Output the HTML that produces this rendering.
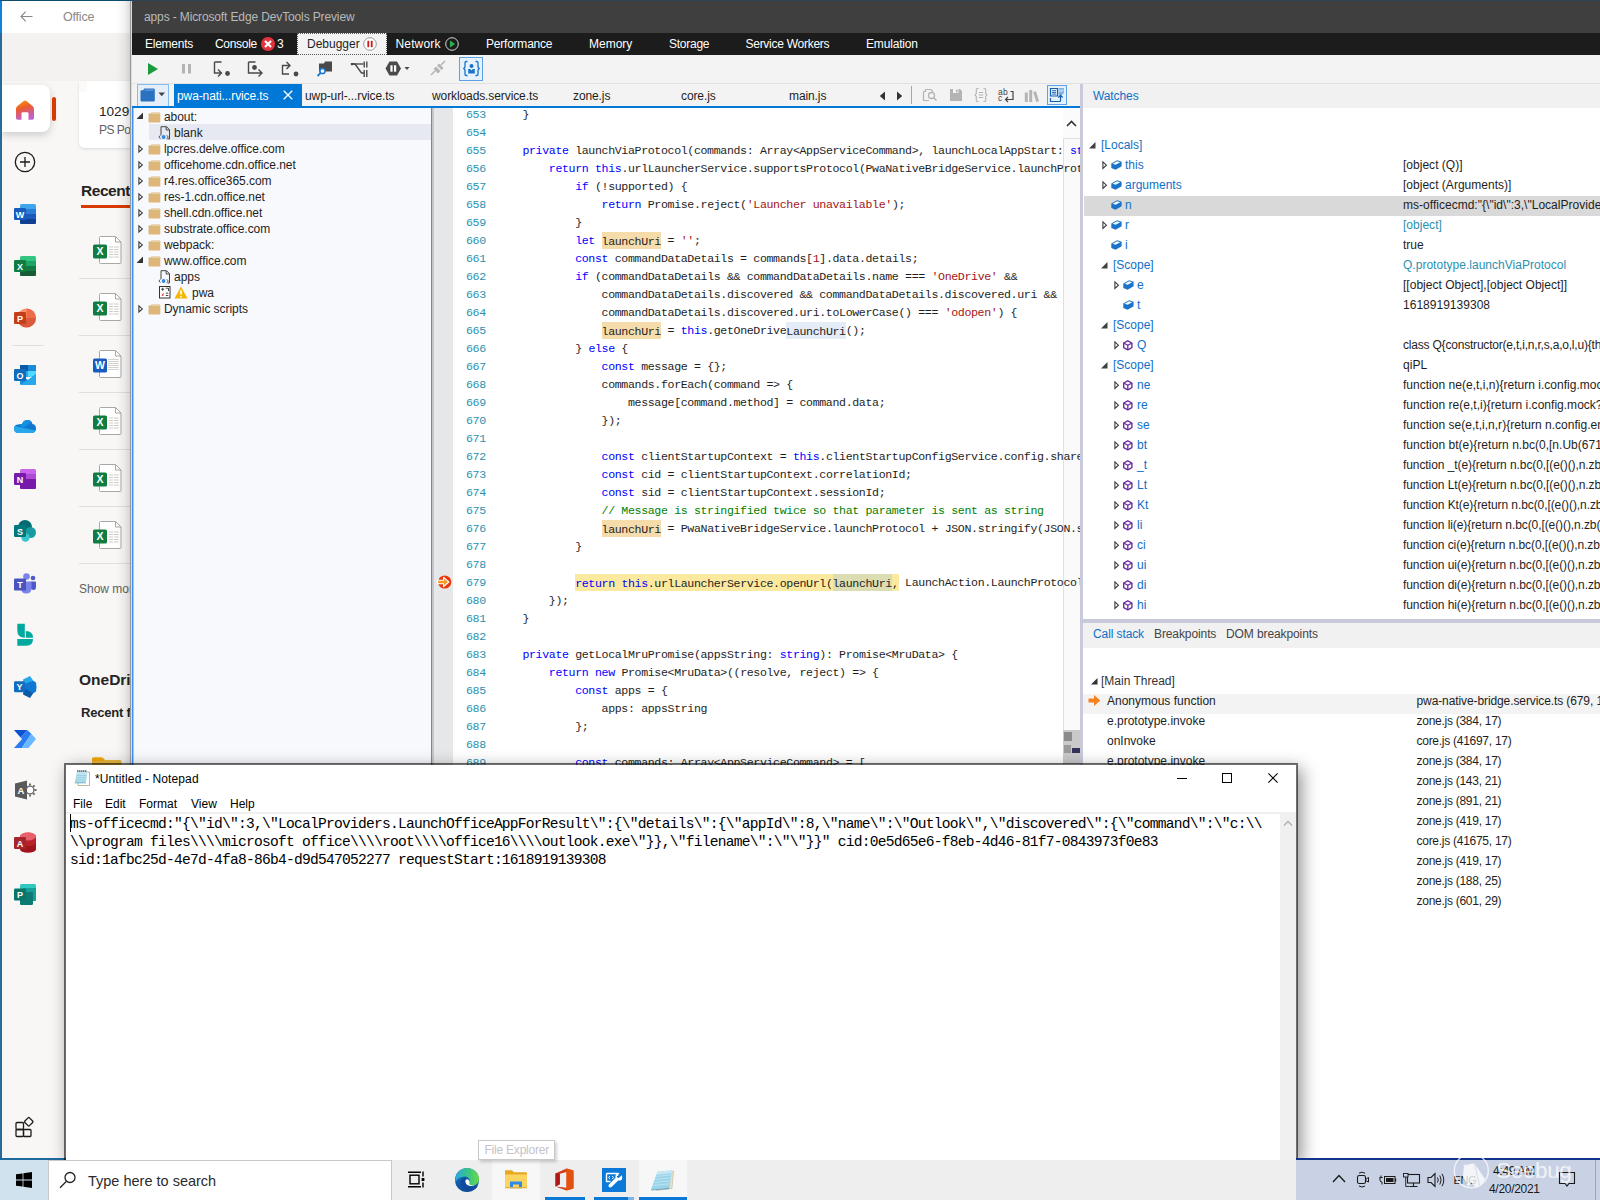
<!DOCTYPE html><html><head><meta charset="utf-8"><title>screenshot</title><style>
*{box-sizing:border-box;margin:0;padding:0}
html,body{width:1600px;height:1200px;overflow:hidden;background:#fff}
body{font-family:"Liberation Sans",sans-serif;font-size:12px;color:#1e1e1e;position:relative}
.abs{position:absolute}
.t{position:absolute;white-space:pre;line-height:16px;height:16px}
.mono{font-family:"Liberation Mono",monospace}
svg{position:absolute;overflow:visible}
/* office */
#office{position:absolute;left:0;top:0;width:140px;height:1160px;background:#f6f5f4;overflow:hidden}
/* devtools */
#dt{position:absolute;left:132px;top:0;width:1468px;height:1160px;background:#fff;overflow:hidden}
#code{position:absolute;left:301px;top:108px;width:647px;height:1052px;background:#fff;overflow:hidden}
.ln{position:absolute;left:32px;width:22px;color:#2b91af;font-family:"Liberation Mono",monospace;font-size:11.6px;letter-spacing:-0.36px;line-height:18px;height:18px;white-space:pre}
.cl{position:absolute;left:62px;font-family:"Liberation Mono",monospace;font-size:11.6px;letter-spacing:-0.36px;line-height:18px;height:18px;white-space:pre;color:#1e1e1e}
.k{color:#0000ff}.s{color:#a31515}.c{color:#008000}
.hl,.hy,.hb,.hg{padding:2.5px 0 2px 0}
.hl{background:#f6dcab}
.hy{background:#fbe9a0}
.hb{background:#e4ecf7}
.hg{background:#dcddb2}
/* notepad */
#np{position:absolute;left:65px;top:763px;width:1233px;height:398px;background:#fff;border:1px solid #5a5a5a;overflow:hidden}
.npt{position:absolute;font-family:"Liberation Mono",monospace;font-size:14.6px;letter-spacing:-0.76px;line-height:18px;height:18px;white-space:pre;color:#000}
/* taskbar */
#tb{position:absolute;left:0;top:1160px;width:1600px;height:40px;background:#eeeeee;overflow:hidden}
</style></head><body>
<div class="abs" style="left:0;top:0;width:132px;height:1160px;overflow:hidden;background:#f8f7f6">
<div class="abs" style="left:0px;top:0px;width:132px;height:33px;background:#fff;"></div>
<div class="abs" style="left:0px;top:33px;width:132px;height:48px;background:#f3f2f1;"></div>
<div class="abs" style="left:79px;top:81px;width:60px;height:67px;background:#fff;border-radius:0 0 0 5px;box-shadow:0 1px 3px rgba(0,0,0,0.12);"></div>
<div class="abs" style="left:79px;top:81px;width:8px;height:11px;background:#fbfaf9;"></div>
<div class="t" style="left:99px;top:102.0px;color:#242424;font-size:13.6px;line-height:20px;height:20px;">10295</div>
<div class="t" style="left:99px;top:121.0px;color:#616161;line-height:18px;height:18px;letter-spacing:-0.5px;">PS Pos</div>
<div class="abs" style="left:2px;top:85px;width:48px;height:47px;background:#fff;border-radius:0 8px 8px 0;box-shadow:0 3px 8px rgba(0,0,0,0.18);"></div>
<svg style="left:16px;top:100px;" width="18" height="20" viewBox="0 0 18 20"><defs><linearGradient id="hg" x1="0" y1="0" x2="0.3" y2="1"><stop offset="0" stop-color="#f7a30c"/><stop offset="0.45" stop-color="#ee5a2a"/><stop offset="1" stop-color="#c060d0"/></linearGradient></defs><path d="M9 0.4Q9.800 0.4 10.4 0.9L16.800 6.200Q18 7.200 18 8.800V18Q18 19.800 16.200 19.800H12.500V13.500Q12.500 12.300 11.300 12.300H6.700Q5.500 12.300 5.500 13.500V19.800H1.800Q0 19.800 0 18V8.800Q0 7.200 1.200 6.200L7.600 0.9Q8.200 0.4 9 0.4Z" fill="url(#hg)"/></svg>
<div class="abs" style="left:52px;top:97px;width:4px;height:24px;background:#d83b01;border-radius:2px;"></div>
<svg style="left:20px;top:11px;" width="13" height="11" viewBox="0 0 13 11"><path d="M12.500 5.5H1M5.700 0.7L1 5.5L5.700 10.3" fill="none" stroke="#8a8886" stroke-width="1.1"/></svg>
<div class="t" style="left:63px;top:7.0px;color:#8a8886;font-size:12.5px;line-height:20px;height:20px;letter-spacing:-0.2px;">Office</div>
<svg style="left:14px;top:151px;" width="22" height="22" viewBox="0 0 22 22"><circle cx="11" cy="11" r="9.700" fill="none" stroke="#1b1b1b" stroke-width="1.3"/><path d="M11 6V16M6 11H16" stroke="#1b1b1b" stroke-width="1.3"/></svg>
<div class="t" style="left:81px;top:179.5px;color:#242424;font-size:15.5px;font-weight:700;line-height:22px;height:22px;letter-spacing:-0.45px;">Recent</div>
<div class="abs" style="left:81px;top:205px;width:60px;height:2.5px;background:#d83b01;"></div>
<svg style="left:93px;top:236px;" width="29" height="28" viewBox="0 0 29 28"><path d="M7.5 0.5H22.500L28 6V26.500Q28 27.500 27 27.500H7.5Q6.500 27.500 6.500 26.500V1.5Q6.500 0.5 7.5 0.5Z" fill="#fff" stroke="#a09e9c" stroke-width="0.9"/><path d="M22.500 0.5V6H28" fill="none" stroke="#a09e9c" stroke-width="0.9"/><path d="M16 11H25.500M16 13.500H25.500M16 16H25.500M16 18.500H25.500M16 21H25.500" stroke="#c8c6c4" stroke-width="0.9"/><path d="M20.500 10.500V21.500" stroke="#fff" stroke-width="0.9"/><rect x="0" y="8.5" width="14" height="14" rx="1.6" fill="#107c41"/><text x="7" y="19.400" font-family="Liberation Sans" font-weight="700" font-size="10.5" fill="#fff" text-anchor="middle">X</text></svg>
<svg style="left:93px;top:293px;" width="29" height="28" viewBox="0 0 29 28"><path d="M7.5 0.5H22.500L28 6V26.500Q28 27.500 27 27.500H7.5Q6.500 27.500 6.500 26.500V1.5Q6.500 0.5 7.5 0.5Z" fill="#fff" stroke="#a09e9c" stroke-width="0.9"/><path d="M22.500 0.5V6H28" fill="none" stroke="#a09e9c" stroke-width="0.9"/><path d="M16 11H25.500M16 13.500H25.500M16 16H25.500M16 18.500H25.500M16 21H25.500" stroke="#c8c6c4" stroke-width="0.9"/><path d="M20.500 10.500V21.500" stroke="#fff" stroke-width="0.9"/><rect x="0" y="8.5" width="14" height="14" rx="1.6" fill="#107c41"/><text x="7" y="19.400" font-family="Liberation Sans" font-weight="700" font-size="10.5" fill="#fff" text-anchor="middle">X</text></svg>
<svg style="left:93px;top:350px;" width="29" height="28" viewBox="0 0 29 28"><path d="M7.5 0.5H22.500L28 6V26.500Q28 27.500 27 27.500H7.5Q6.500 27.500 6.500 26.500V1.5Q6.500 0.5 7.5 0.5Z" fill="#fff" stroke="#a09e9c" stroke-width="0.9"/><path d="M22.500 0.5V6H28" fill="none" stroke="#a09e9c" stroke-width="0.9"/><path d="M15 9.500H25.500M15 11.500H25.500M15 13.500H25.500M15 15.500H25.500M15 17.500H25.500M15 19.500H25.500" stroke="#c8c6c4" stroke-width="0.8"/><rect x="0" y="8.5" width="14" height="14" rx="1.6" fill="#185abd"/><text x="7" y="19.400" font-family="Liberation Sans" font-weight="700" font-size="10.5" fill="#fff" text-anchor="middle">W</text></svg>
<svg style="left:93px;top:407px;" width="29" height="28" viewBox="0 0 29 28"><path d="M7.5 0.5H22.500L28 6V26.500Q28 27.500 27 27.500H7.5Q6.500 27.500 6.500 26.500V1.5Q6.500 0.5 7.5 0.5Z" fill="#fff" stroke="#a09e9c" stroke-width="0.9"/><path d="M22.500 0.5V6H28" fill="none" stroke="#a09e9c" stroke-width="0.9"/><path d="M16 11H25.500M16 13.500H25.500M16 16H25.500M16 18.500H25.500M16 21H25.500" stroke="#c8c6c4" stroke-width="0.9"/><path d="M20.500 10.500V21.500" stroke="#fff" stroke-width="0.9"/><rect x="0" y="8.5" width="14" height="14" rx="1.6" fill="#107c41"/><text x="7" y="19.400" font-family="Liberation Sans" font-weight="700" font-size="10.5" fill="#fff" text-anchor="middle">X</text></svg>
<svg style="left:93px;top:464px;" width="29" height="28" viewBox="0 0 29 28"><path d="M7.5 0.5H22.500L28 6V26.500Q28 27.500 27 27.500H7.5Q6.500 27.500 6.500 26.500V1.5Q6.500 0.5 7.5 0.5Z" fill="#fff" stroke="#a09e9c" stroke-width="0.9"/><path d="M22.500 0.5V6H28" fill="none" stroke="#a09e9c" stroke-width="0.9"/><path d="M16 11H25.500M16 13.500H25.500M16 16H25.500M16 18.500H25.500M16 21H25.500" stroke="#c8c6c4" stroke-width="0.9"/><path d="M20.500 10.500V21.500" stroke="#fff" stroke-width="0.9"/><rect x="0" y="8.5" width="14" height="14" rx="1.6" fill="#107c41"/><text x="7" y="19.400" font-family="Liberation Sans" font-weight="700" font-size="10.5" fill="#fff" text-anchor="middle">X</text></svg>
<svg style="left:93px;top:521px;" width="29" height="28" viewBox="0 0 29 28"><path d="M7.5 0.5H22.500L28 6V26.500Q28 27.500 27 27.500H7.5Q6.500 27.500 6.500 26.500V1.5Q6.500 0.5 7.5 0.5Z" fill="#fff" stroke="#a09e9c" stroke-width="0.9"/><path d="M22.500 0.5V6H28" fill="none" stroke="#a09e9c" stroke-width="0.9"/><path d="M16 11H25.500M16 13.500H25.500M16 16H25.500M16 18.500H25.500M16 21H25.500" stroke="#c8c6c4" stroke-width="0.9"/><path d="M20.500 10.500V21.500" stroke="#fff" stroke-width="0.9"/><rect x="0" y="8.5" width="14" height="14" rx="1.6" fill="#107c41"/><text x="7" y="19.400" font-family="Liberation Sans" font-weight="700" font-size="10.5" fill="#fff" text-anchor="middle">X</text></svg>
<div class="abs" style="left:79px;top:278px;width:60px;height:1px;background:#e1dfdd;"></div>
<div class="abs" style="left:79px;top:335px;width:60px;height:1px;background:#e1dfdd;"></div>
<div class="abs" style="left:79px;top:392px;width:60px;height:1px;background:#e1dfdd;"></div>
<div class="abs" style="left:79px;top:449px;width:60px;height:1px;background:#e1dfdd;"></div>
<div class="abs" style="left:79px;top:506px;width:60px;height:1px;background:#e1dfdd;"></div>
<div class="abs" style="left:79px;top:563px;width:60px;height:1px;background:#e1dfdd;"></div>
<div class="t" style="left:79px;top:580.0px;color:#616161;line-height:18px;height:18px;">Show mor</div>
<div class="t" style="left:79px;top:669.0px;color:#242424;font-size:15.5px;font-weight:700;line-height:22px;height:22px;font-weight:600;">OneDri</div>
<div class="t" style="left:81px;top:702.5px;color:#242424;font-size:13px;font-weight:700;line-height:20px;height:20px;letter-spacing:-0.2px;">Recent f</div>
<svg style="left:92px;top:757px;" width="30" height="10" viewBox="0 0 30 10"><path d="M0 2Q0 0.5 1.500 0.5H9.500Q10.500 0.5 11.500 1.500L13 3H28Q29.500 3 29.500 4.500V10H0Z" fill="#e8b840"/><path d="M0 2Q0 0.5 1.500 0.5H9.500Q10.500 0.5 11.500 1.500L12.500 2.500L11 4H0Z" fill="#f0a800"/></svg>
<div class="abs" style="left:12px;top:345px;width:32px;height:1px;background:#e1dfdd;"></div>
<svg style="left:14px;top:204px;" width="22" height="20" viewBox="0 0 22 20"><rect x="6" y="0" width="16" height="20" rx="1.5" fill="#41a5ee"/><rect x="6" y="5" width="16" height="5" fill="#2b7cd3"/><rect x="6" y="10" width="16" height="5" fill="#185abd"/><path d="M6 15H22V18.500Q22 20 20.500 20H7.5Q6 20 6 18.500Z" fill="#103f91"/><rect x="0" y="4" width="12" height="12" rx="1.3" fill="#185abd"/><text x="6" y="13.600" font-family="Liberation Sans" font-weight="700" font-size="9" fill="#fff" text-anchor="middle">W</text></svg>
<svg style="left:14px;top:256px;" width="22" height="20" viewBox="0 0 22 20"><rect x="6" y="0" width="16" height="20" rx="1.5" fill="#33c481"/><rect x="6" y="5" width="16" height="5" fill="#21a366"/><rect x="6" y="10" width="16" height="5" fill="#107c41"/><path d="M6 15H22V18.500Q22 20 20.500 20H7.5Q6 20 6 18.500Z" fill="#185c37"/><rect x="0" y="4" width="12" height="12" rx="1.3" fill="#107c41"/><text x="6" y="13.600" font-family="Liberation Sans" font-weight="700" font-size="9" fill="#fff" text-anchor="middle">X</text></svg>
<svg style="left:14px;top:308px;" width="22" height="20" viewBox="0 0 22 20"><circle cx="12.500" cy="10" r="9.500" fill="#ff8f6b"/><path d="M12.500 0.5A9.500 9.500 0 0 1 22 10H12.500Z" fill="#ed6c47"/><path d="M3 10H22A9.500 9.500 0 0 1 3 10Z" fill="#d35230" opacity="0.85"/><rect x="0" y="4" width="12" height="12" rx="1.3" fill="#c43e1c"/><text x="6.0" y="13.6" font-family="Liberation Sans" font-weight="700" font-size="9" fill="#fff" text-anchor="middle">P</text></svg>
<svg style="left:14px;top:365px;" width="22" height="20" viewBox="0 0 22 20"><rect x="6" y="0" width="16" height="12" rx="1.2" fill="#28a8ea"/><rect x="6" y="0" width="8" height="6" fill="#0a5aa8"/><rect x="14" y="0" width="8" height="6" fill="#1a8ad8"/><rect x="14" y="6" width="8" height="6" fill="#50d9ff"/><path d="M6 10L14 15L22 9V18.500Q22 20 20.500 20H7.500Q6 20 6 18.500Z" fill="#1490df"/><path d="M6 20L22 10V18.500Q22 20 20.500 20Z" fill="#28a8ea"/><rect x="0" y="4" width="12" height="12" rx="1.3" fill="#0f6cbd"/><text x="6.0" y="13.6" font-family="Liberation Sans" font-weight="700" font-size="9" fill="#fff" text-anchor="middle">O</text></svg>
<svg style="left:14px;top:419px;" width="22" height="15" viewBox="0 0 22 15"><path d="M8 5Q9.500 1 13.500 1Q17.500 1 18.500 5Q22 5.500 22 9.500Q22 13.500 18 14H5Q0 14 0 9.500Q0 5.500 4.500 5.500Q6 4.600 8 5Z" fill="#0f78d4"/><path d="M4.500 5.500Q6 4.600 8 5Q9.500 1 13.500 1Q16 1 17.500 3L9 9Z" fill="#1490df"/><path d="M0 9.500Q0 14 5 14H18Q20.500 13.700 21.500 11.500L9 9L1 7Q0 8 0 9.500Z" fill="#28a8ea"/></svg>
<svg style="left:14px;top:469px;" width="22" height="20" viewBox="0 0 22 20"><rect x="6" y="0" width="16" height="20" rx="1.5" fill="#ca64ea"/><rect x="6" y="5" width="16" height="5" fill="#ae4bd5"/><rect x="6" y="10" width="16" height="5" fill="#7719aa"/><path d="M6 15H22V18.500Q22 20 20.500 20H7.5Q6 20 6 18.500Z" fill="#7719aa"/><rect x="0" y="4" width="12" height="12" rx="1.3" fill="#7719aa"/><text x="6" y="13.600" font-family="Liberation Sans" font-weight="700" font-size="9" fill="#fff" text-anchor="middle">N</text></svg>
<svg style="left:14px;top:520px;" width="22" height="22" viewBox="0 0 22 22"><circle cx="11" cy="7" r="7" fill="#036c70"/><circle cx="16.500" cy="12.500" r="5.500" fill="#1a9ba1"/><circle cx="11.500" cy="17.500" r="4.200" fill="#37c6d0"/><rect x="0" y="5" width="12" height="12" rx="1.3" fill="#03787c"/><text x="6.0" y="14.6" font-family="Liberation Sans" font-weight="700" font-size="9" fill="#fff" text-anchor="middle">S</text></svg>
<svg style="left:14px;top:573px;" width="22" height="21" viewBox="0 0 22 21"><circle cx="12.500" cy="3.500" r="3.300" fill="#7b83eb"/><circle cx="19" cy="5" r="2.300" fill="#5059c9"/><path d="M16.500 8.500H21Q22 8.500 22 9.500V14Q22 17 19.500 17Q17 17 16.500 15Z" fill="#5059c9"/><path d="M7 8.500H16.500Q17.500 8.500 17.500 9.500V15Q17.500 20.500 12.200 20.500Q7 20.500 7 15Z" fill="#7b83eb"/><rect x="0" y="5.5" width="12" height="12" rx="1.3" fill="#4b53bc"/><text x="6.0" y="15.1" font-family="Liberation Sans" font-weight="700" font-size="9" fill="#fff" text-anchor="middle">T</text></svg>
<svg style="left:17px;top:623px;" width="17" height="24" viewBox="0 0 17 24"><path d="M0.300 0.800H7.800V14.800Q0.300 14.800 0.300 7.300Z" fill="#00a99d"/><path d="M8.800 8V14.800H16Q16 8 8.800 8Z" fill="#00a99d"/><path d="M0.300 16H16Q16 22.800 9.200 22.800H0.300Z" fill="#00a99d"/></svg>
<svg style="left:14px;top:676px;" width="22" height="22" viewBox="0 0 22 22"><path d="M9 3.500L16 0L19.300 4.800L10 10Z" fill="#28a8ea"/><path d="M10 8L19.300 4.800L22 6.500Q23 11 22 15.500L19.300 17.200L10 14Z" fill="#0f78d4"/><path d="M10 12L19.300 17.200L16 22L9 18.500Z" fill="#0a5aa8"/><rect x="0" y="5.3" width="11" height="11" rx="1.3" fill="#106ebe"/><text x="5.5" y="13.9" font-family="Liberation Sans" font-weight="700" font-size="9" fill="#fff" text-anchor="middle">Y</text></svg>
<svg style="left:14px;top:730px;" width="22" height="18" viewBox="0 0 22 18"><path d="M0 0H13.300L6.600 7.400Z" fill="#0b53ce"/><path d="M0 18H7.800L17.300 3.800L13.300 0L6.600 7.400L8 9Z" fill="#2a7cf0"/><path d="M17.300 3.800L22 9L14.500 18H7.800Z" fill="#6ab8ff"/></svg>
<svg style="left:14px;top:779px;" width="24" height="22" viewBox="0 0 24 22"><circle cx="16" cy="11" r="3.900" fill="#fff" stroke="#6a6a6a" stroke-width="1.3"/><path d="M20.40 11.00L22.50 11.00M19.11 14.11L20.60 15.60M16.00 15.40L16.00 17.50M12.89 14.11L11.40 15.60M11.60 11.00L9.50 11.00M12.89 7.89L11.40 6.40M16.00 6.60L16.00 4.50M19.11 7.89L20.60 6.40" stroke="#6a6a6a" stroke-width="2"/><path d="M1 4.500L13 1.500V20.500L1 17.500Z" fill="#5a5a5a"/><text x="7" y="14.500" font-family="Liberation Sans" font-weight="700" font-size="9.500" fill="#fff" text-anchor="middle">A</text></svg>
<svg style="left:14px;top:832px;" width="22" height="21" viewBox="0 0 22 21"><ellipse cx="14" cy="4.500" rx="8" ry="4" fill="#e0505a"/><path d="M6 4.500H22V16.500Q22 20.500 14 20.500Q6 20.500 6 16.500Z" fill="#b8202a"/><ellipse cx="14" cy="4.500" rx="8" ry="4" fill="#e8606a"/><path d="M6 10Q6 14 14 14Q22 14 22 10V16.500Q22 20.500 14 20.500Q6 20.500 6 16.500Z" fill="#a0141e"/><rect x="0" y="5" width="12" height="12" rx="1.3" fill="#a4262c"/><text x="6.0" y="14.6" font-family="Liberation Sans" font-weight="700" font-size="9" fill="#fff" text-anchor="middle">A</text></svg>
<svg style="left:14px;top:884px;" width="22" height="21" viewBox="0 0 22 21"><rect x="6" y="0" width="16" height="16" rx="1.5" fill="#30c8c0"/><rect x="9" y="4" width="13" height="13" fill="#18a098"/><rect x="6" y="8" width="13" height="13" rx="1.2" fill="#0e7a74"/><rect x="0" y="4.5" width="12" height="12" rx="1.3" fill="#077568"/><text x="6.0" y="14.1" font-family="Liberation Sans" font-weight="700" font-size="9" fill="#fff" text-anchor="middle">P</text></svg>
<svg style="left:15px;top:1116px;" width="21" height="22" viewBox="0 0 21 22"><rect x="1" y="6.500" width="7.500" height="7" rx="1" fill="none" stroke="#1b1b1b" stroke-width="1.3"/><rect x="1" y="13.500" width="7.500" height="7" rx="1" fill="none" stroke="#1b1b1b" stroke-width="1.3"/><rect x="8.500" y="13.500" width="7.500" height="7" rx="1" fill="none" stroke="#1b1b1b" stroke-width="1.3"/><rect x="10.500" y="2.500" width="6.500" height="6.500" rx="1" transform="rotate(45 13.750 5.750)" fill="none" stroke="#1b1b1b" stroke-width="1.3"/></svg>
<div class="abs" style="left:116px;top:0;width:14px;height:1160px;background:linear-gradient(to right,rgba(0,0,0,0),rgba(0,0,0,0.05) 60%,rgba(0,0,0,0.14) 100%)"></div>
<div class="abs" style="left:130px;top:0px;width:1px;height:1160px;background:#9a9a9a;"></div>
<div class="abs" style="left:131px;top:0px;width:1px;height:1160px;background:#dcdcdc;"></div>
<div class="abs" style="left:0px;top:0px;width:2px;height:1160px;background:#2a6a98;"></div>
<div class="abs" style="left:0px;top:0px;width:2px;height:33px;background:#0a84d8;"></div>
<div class="abs" style="left:0px;top:0px;width:132px;height:1px;background:#0f4a70;"></div>
</div>
<div class="abs" style="left:0px;top:1158px;width:66px;height:2px;background:#1e6a9e;"></div>
<div id="dt"><div class="abs" style="left:-132px;top:0;width:1600px;height:1200px">
<div class="abs" style="left:132px;top:0px;width:1468px;height:33px;background:#3f3f3f;"></div>
<div class="abs" style="left:132px;top:0px;width:1468px;height:1px;background:#2f4555;"></div>
<div class="t" style="left:144px;top:8.5px;color:#b9b9b9;letter-spacing:-0.13px;">apps - Microsoft Edge DevTools Preview</div>
<div class="abs" style="left:132px;top:33px;width:1468px;height:22px;background:#1c1c1c;"></div>
<div class="t" style="left:145px;top:36.0px;color:#ffffff;letter-spacing:-0.25px;">Elements</div>
<div class="t" style="left:215px;top:36.0px;color:#ffffff;letter-spacing:-0.3px;">Console</div>
<div class="t" style="left:395.5px;top:36.0px;color:#ffffff;letter-spacing:0.15px;">Network</div>
<div class="t" style="left:486px;top:36.0px;color:#ffffff;letter-spacing:-0.22px;">Performance</div>
<div class="t" style="left:589px;top:36.0px;color:#ffffff;letter-spacing:0px;">Memory</div>
<div class="t" style="left:669px;top:36.0px;color:#ffffff;letter-spacing:-0.25px;">Storage</div>
<div class="t" style="left:745.5px;top:36.0px;color:#ffffff;letter-spacing:-0.27px;">Service Workers</div>
<div class="t" style="left:866px;top:36.0px;color:#ffffff;letter-spacing:-0.17px;">Emulation</div>
<svg style="left:261px;top:37px;" width="14" height="14" viewBox="0 0 14 14"><circle cx="7" cy="7" r="7" fill="#e5333d"/><path d="M4 4L10 10M10 4L4 10" stroke="#fff" stroke-width="2.2"/></svg>
<div class="t" style="left:277px;top:36.0px;color:#ffffff;">3</div>
<div class="abs" style="left:297px;top:33px;width:90px;height:22px;background:#f3f3f3;border:1px dotted #555;"></div>
<div class="t" style="left:307px;top:36.0px;">Debugger</div>
<svg style="left:363px;top:37px;" width="14" height="14" viewBox="0 0 14 14"><circle cx="7" cy="7" r="6.3" fill="#fff" stroke="#9a9a9a" stroke-width="1"/><rect x="4.4" y="3.8" width="1.8" height="6.4" fill="#d01818"/><rect x="7.8" y="3.8" width="1.8" height="6.4" fill="#d01818"/></svg>
<svg style="left:445px;top:37px;" width="14" height="14" viewBox="0 0 14 14"><circle cx="7" cy="7" r="6.3" fill="#1c1c1c" stroke="#d8d8d8" stroke-width="1"/><path d="M5 3.6L10.2 7L5 10.4Z" fill="#2bb24c"/></svg>
<div class="abs" style="left:132px;top:55px;width:1468px;height:29px;background:#f3f3f3;"></div>
<div class="abs" style="left:132px;top:83px;width:1468px;height:1px;background:#e2e2e2;"></div>
<div class="abs" style="left:132px;top:84px;width:951px;height:22px;background:#f3f3f3;"></div>
<div class="abs" style="left:132px;top:106px;width:948px;height:2px;background:#0078d7;"></div>
<svg style="left:147px;top:62px;" width="12" height="14" viewBox="0 0 12 14"><path d="M1 1L11 7L1 13Z" fill="#1a9b3c"/></svg>
<svg style="left:182px;top:64px;" width="10" height="10" viewBox="0 0 10 10"><rect x="0" y="0" width="3" height="9.5" fill="#b4b4b4"/><rect x="6" y="0" width="3" height="9.5" fill="#b4b4b4"/></svg>
<svg style="left:213px;top:60px;" width="18" height="18" viewBox="0 0 18 18"><path d="M1.5 2H8.5M1.5 2V13H7.5M5 9.5L8.5 13L5 16.5" fill="none" stroke="#4a4a4a" stroke-width="1.4"/><circle cx="14.5" cy="13.5" r="2.4" fill="#4a4a4a"/></svg>
<svg style="left:247px;top:60px;" width="18" height="18" viewBox="0 0 18 18"><path d="M1.5 2H8.5M1.5 2V13H15M11.5 9.5L15 13L11.5 16.5" fill="none" stroke="#4a4a4a" stroke-width="1.4"/><circle cx="7.5" cy="7.5" r="2.4" fill="#4a4a4a"/></svg>
<svg style="left:281px;top:60px;" width="18" height="18" viewBox="0 0 18 18"><path d="M8 14H1.5V5.5H8.5M5.5 2L9 5.5L5.5 9" fill="none" stroke="#4a4a4a" stroke-width="1.4"/><circle cx="15" cy="14" r="2.4" fill="#4a4a4a"/></svg>
<svg style="left:316px;top:60px;" width="18" height="18" viewBox="0 0 18 18"><path d="M3 3.5H8L9 1.5H16V11.5H3Z" fill="#4a4a4a"/><circle cx="6.5" cy="11" r="2.6" fill="#f3f3f3" stroke="#1a78d8" stroke-width="1.5"/><path d="M4.6 13L1.5 16" stroke="#1a78d8" stroke-width="1.8"/></svg>
<svg style="left:350px;top:60px;" width="18" height="18" viewBox="0 0 18 18"><path d="M1.5 4H5L11.5 13H14" fill="none" stroke="#4a4a4a" stroke-width="1.4"/><path d="M3 4H13.5" stroke="#4a4a4a" stroke-width="1.4"/><rect x="0.8" y="3" width="2.4" height="2.2" fill="#4a4a4a"/><path d="M14.2 1.5V7.5M16.8 1.5V7.5M14.2 10V17M16.8 10V17" stroke="#4a4a4a" stroke-width="1.4"/></svg>
<svg style="left:385px;top:60px;" width="26" height="18" viewBox="0 0 26 18"><path d="M0.5 8.5L4.5 1.5H12L16 8.5L12 15.5H4.5Z" fill="#4a4a4a"/><rect x="5.4" y="5.3" width="2.2" height="6.4" fill="#fff"/><rect x="9" y="5.3" width="2.2" height="6.4" fill="#fff"/><path d="M19.5 7H24.5L22 10Z" fill="#4a4a4a"/></svg>
<svg style="left:429px;top:60px;" width="18" height="18" viewBox="0 0 18 18"><path d="M2 15L6 11M12 5L16 1" stroke="#b4b4b4" stroke-width="1.6"/><path d="M4.5 9L7 6.5L11.5 11L9 13.5Z M8 5.5L10 3.5L14.5 8L12.5 10Z" fill="#b4b4b4"/></svg>
<div class="abs" style="left:459px;top:57px;width:24px;height:24px;background:#e5f1fb;border:1px solid #5da2e8;"></div>
<svg style="left:463px;top:60px;" width="17" height="18" viewBox="0 0 17 18"><path d="M4.5 1.5H3.2Q2 1.5 2 2.8V7L0.8 8.5L2 10V14.2Q2 15.5 3.2 15.5H4.5M12.5 1.5H13.8Q15 1.5 15 2.8V7L16.2 8.5L15 10V14.2Q15 15.5 13.8 15.5H12.5" fill="none" stroke="#1a73c8" stroke-width="1.3"/><circle cx="8.5" cy="6" r="2" fill="#1a73c8"/><path d="M5.2 9H11.8V13.5H5.2Z" fill="#1a73c8"/><path d="M7.2 9L8.5 10.5L9.8 9Z" fill="#e5f1fb"/></svg>
<div class="abs" style="left:137px;top:84px;width:32px;height:22px;background:#e4effa;border:1px solid #86bdf0;border-bottom:none;"></div>
<svg style="left:140px;top:88px;" width="16" height="14" viewBox="0 0 16 14"><path d="M0.5 3.2Q0.5 2.2 1.5 2.2H3.2L4.2 0.6H13.5Q14.8 0.6 14.8 1.8V12.6Q14.8 13.4 14 13.4H1.3Q0.5 13.4 0.5 12.6Z" fill="#2a72c0"/><path d="M4.6 1.6H13.6V2.6H4.6Z" fill="#6ea6e0"/></svg>
<svg style="left:158px;top:92px;" width="8" height="5" viewBox="0 0 8 5"><path d="M0.5 0.5H7L3.75 4.2Z" fill="#444"/></svg>
<div class="abs" style="left:174px;top:84px;width:128px;height:22px;background:#0078d7;"></div>
<div class="t" style="left:177px;top:87.5px;color:#ffffff;letter-spacing:-0.1px;">pwa-nati...rvice.ts</div>
<svg style="left:283px;top:90px;" width="10" height="10" viewBox="0 0 10 10"><path d="M0.7 0.7L9.3 9.3M9.3 0.7L0.7 9.3" stroke="#fff" stroke-width="1.3"/></svg>
<div class="t" style="left:305px;top:87.5px;letter-spacing:-0.1px;">uwp-url-...rvice.ts</div>
<div class="t" style="left:432px;top:87.5px;letter-spacing:-0.1px;">workloads.service.ts</div>
<div class="t" style="left:573px;top:87.5px;letter-spacing:-0.1px;">zone.js</div>
<div class="t" style="left:681px;top:87.5px;letter-spacing:-0.1px;">core.js</div>
<div class="t" style="left:789px;top:87.5px;letter-spacing:-0.1px;">main.js</div>
<svg style="left:879px;top:91px;" width="7" height="10" viewBox="0 0 7 10"><path d="M6 0.5V9.5L0.8 5Z" fill="#333"/></svg>
<svg style="left:896px;top:91px;" width="7" height="10" viewBox="0 0 7 10"><path d="M1 0.5V9.5L6.2 5Z" fill="#333"/></svg>
<div class="abs" style="left:911px;top:86px;width:1px;height:18px;background:#a6a6a6;"></div>
<svg style="left:922px;top:87px;" width="16" height="16" viewBox="0 0 16 16"><path d="M1.5 4.5H3.5V2.5H9L11 4.5M1.5 4.5V13.5H7" fill="none" stroke="#b4b4b4" stroke-width="1.2"/><circle cx="9.5" cy="8.5" r="3" fill="none" stroke="#b4b4b4" stroke-width="1.3"/><path d="M11.7 10.7L14.5 13.5" stroke="#b4b4b4" stroke-width="1.5"/></svg>
<svg style="left:949px;top:88px;" width="14" height="14" viewBox="0 0 14 14"><path d="M1 1H11L13 3V13H1Z" fill="#b4b4b4"/><rect x="4" y="1" width="5.5" height="4" fill="#f3f3f3"/><rect x="7" y="1.6" width="1.6" height="2.8" fill="#b4b4b4"/></svg>
<svg style="left:974px;top:87px;" width="14" height="16" viewBox="0 0 14 16"><path d="M4.5 1.5H3.3Q2.3 1.5 2.3 2.5V6.5L1 8L2.3 9.5V13.5Q2.3 14.5 3.3 14.5H4.5M9.5 1.5H10.7Q11.7 1.5 11.7 2.5V6.5L13 8L11.7 9.5V13.5Q11.7 14.5 10.7 14.5H9.5" fill="none" stroke="#b4b4b4" stroke-width="1.1"/><path d="M4.8 5.5H9.2M4.8 8H9.2M4.8 10.5H9.2" stroke="#b4b4b4" stroke-width="1"/></svg>
<div class="t" style="left:998px;top:87.5px;color:#444;font-size:8.5px;line-height:8px;height:8px;letter-spacing:0.2px;">ab</div>
<div class="t" style="left:998px;top:94.0px;color:#444;font-size:8.5px;line-height:8px;height:8px;">c</div>
<svg style="left:1003px;top:88.5px;" width="12" height="15" viewBox="0 0 12 15"><path d="M7.5 2.500H10V10.500H2.500M5 8L2.500 10.500L5 13" fill="none" stroke="#444" stroke-width="1.2"/></svg>
<svg style="left:1024px;top:88px;" width="15" height="14" viewBox="0 0 15 14"><rect x="0.800" y="4.500" width="3" height="9.500" fill="#b4b4b4"/><rect x="5.200" y="2" width="3" height="12" fill="#b4b4b4"/><path d="M9.200 4L12 3.200L15 13.200L12.200 14Z" fill="#b4b4b4"/></svg>
<div class="abs" style="left:1047px;top:85px;width:20px;height:20px;background:#e5f1fb;border:1px solid #5da2e8;"></div>
<svg style="left:1049px;top:87px;" width="16" height="16" viewBox="0 0 16 16"><path d="M1.5 1.5H8.5V9H1.5Z" fill="none" stroke="#1a60b0" stroke-width="1.2"/><path d="M3 3.7H7M3 5.4H7M3 7.1H7" stroke="#1a60b0" stroke-width="0.9"/><path d="M9.500 1H15V6L12.500 8.500L9.500 8.500Z" fill="#7fb2e4"/><path d="M10.800 2.500V5M12.300 2.500V5M13.800 2.500V4.500" stroke="#e5f1fb" stroke-width="0.8"/><path d="M1.5 11V14.5H11.5M11.5 14.5V8.5M9.3 10.5L11.5 8.3L13.7 10.5" fill="none" stroke="#1a60b0" stroke-width="1.2"/></svg>
<div class="abs" style="left:132px;top:108px;width:300px;height:1052px;background:#f8f9fc;border-left:1px solid #3a92f8;border-right:1px solid #3a96ff;"></div>
<div class="abs" style="left:133px;top:108px;width:1px;height:1052px;background:#a4c8f4;"></div>
<div class="abs" style="left:432px;top:108px;width:3px;height:1052px;background:#c4c4c8;background:linear-gradient(to right,#c2c0c6,#cfcfd6);"></div>
<div class="abs" style="left:149px;top:124px;width:282px;height:16px;background:#e6e9f2;"></div>
<svg style="left:136px;top:112px;" width="8" height="8" viewBox="0 0 8 8"><path d="M7 0.5V7H0.5Z" fill="#333"/></svg>
<svg style="left:148px;top:111.7px;" width="13" height="11" viewBox="0 0 13 11"><path d="M0.5 2.2Q0.5 1.4 1.3 1.4H2.8L3.6 0.4H11.4Q12.3 0.4 12.3 1.3V9.8Q12.3 10.6 11.5 10.6H1.3Q0.5 10.6 0.5 9.8Z" fill="#dcb67a"/><path d="M3.9 1.3H11.5V2.1H3.9Z" fill="#f0dcb4"/></svg>
<div class="t" style="left:164px;top:109.0px;letter-spacing:-0.05px;">about:</div>
<svg style="left:158px;top:126px;" width="13" height="14" viewBox="0 0 13 14"><path d="M3 9V0.7H8.5L11.5 3.7V13H9.5" fill="none" stroke="#444" stroke-width="1"/><path d="M8.2 0.7V4H11.5" fill="none" stroke="#444" stroke-width="1"/><circle cx="5.6" cy="11" r="1.9" fill="#2a8be0"/><path d="M2.4 9.3L0.9 11L2.4 12.7M8.8 9.3L10.3 11L8.8 12.7" fill="none" stroke="#444" stroke-width="0.9"/></svg>
<div class="t" style="left:174px;top:125.0px;">blank</div>
<svg style="left:137.5px;top:145px;" width="6" height="9" viewBox="0 0 6 9"><path d="M0.900 0.900L4.300 3.950L0.900 7Z" fill="#fff" stroke="#3a3a3a" stroke-width="1.1"/></svg>
<svg style="left:148px;top:143.7px;" width="13" height="11" viewBox="0 0 13 11"><path d="M0.5 2.2Q0.5 1.4 1.3 1.4H2.8L3.6 0.4H11.4Q12.3 0.4 12.3 1.3V9.8Q12.3 10.6 11.5 10.6H1.3Q0.5 10.6 0.5 9.8Z" fill="#dcb67a"/><path d="M3.9 1.3H11.5V2.1H3.9Z" fill="#f0dcb4"/></svg>
<div class="t" style="left:164px;top:141.0px;letter-spacing:-0.05px;">lpcres.delve.office.com</div>
<svg style="left:137.5px;top:161px;" width="6" height="9" viewBox="0 0 6 9"><path d="M0.900 0.900L4.300 3.950L0.900 7Z" fill="#fff" stroke="#3a3a3a" stroke-width="1.1"/></svg>
<svg style="left:148px;top:159.7px;" width="13" height="11" viewBox="0 0 13 11"><path d="M0.5 2.2Q0.5 1.4 1.3 1.4H2.8L3.6 0.4H11.4Q12.3 0.4 12.3 1.3V9.8Q12.3 10.6 11.5 10.6H1.3Q0.5 10.6 0.5 9.8Z" fill="#dcb67a"/><path d="M3.9 1.3H11.5V2.1H3.9Z" fill="#f0dcb4"/></svg>
<div class="t" style="left:164px;top:157.0px;letter-spacing:-0.05px;">officehome.cdn.office.net</div>
<svg style="left:137.5px;top:177px;" width="6" height="9" viewBox="0 0 6 9"><path d="M0.900 0.900L4.300 3.950L0.900 7Z" fill="#fff" stroke="#3a3a3a" stroke-width="1.1"/></svg>
<svg style="left:148px;top:175.7px;" width="13" height="11" viewBox="0 0 13 11"><path d="M0.5 2.2Q0.5 1.4 1.3 1.4H2.8L3.6 0.4H11.4Q12.3 0.4 12.3 1.3V9.8Q12.3 10.6 11.5 10.6H1.3Q0.5 10.6 0.5 9.8Z" fill="#dcb67a"/><path d="M3.9 1.3H11.5V2.1H3.9Z" fill="#f0dcb4"/></svg>
<div class="t" style="left:164px;top:173.0px;letter-spacing:-0.05px;">r4.res.office365.com</div>
<svg style="left:137.5px;top:193px;" width="6" height="9" viewBox="0 0 6 9"><path d="M0.900 0.900L4.300 3.950L0.900 7Z" fill="#fff" stroke="#3a3a3a" stroke-width="1.1"/></svg>
<svg style="left:148px;top:191.7px;" width="13" height="11" viewBox="0 0 13 11"><path d="M0.5 2.2Q0.5 1.4 1.3 1.4H2.8L3.6 0.4H11.4Q12.3 0.4 12.3 1.3V9.8Q12.3 10.6 11.5 10.6H1.3Q0.5 10.6 0.5 9.8Z" fill="#dcb67a"/><path d="M3.9 1.3H11.5V2.1H3.9Z" fill="#f0dcb4"/></svg>
<div class="t" style="left:164px;top:189.0px;letter-spacing:-0.05px;">res-1.cdn.office.net</div>
<svg style="left:137.5px;top:209px;" width="6" height="9" viewBox="0 0 6 9"><path d="M0.900 0.900L4.300 3.950L0.900 7Z" fill="#fff" stroke="#3a3a3a" stroke-width="1.1"/></svg>
<svg style="left:148px;top:207.7px;" width="13" height="11" viewBox="0 0 13 11"><path d="M0.5 2.2Q0.5 1.4 1.3 1.4H2.8L3.6 0.4H11.4Q12.3 0.4 12.3 1.3V9.8Q12.3 10.6 11.5 10.6H1.3Q0.5 10.6 0.5 9.8Z" fill="#dcb67a"/><path d="M3.9 1.3H11.5V2.1H3.9Z" fill="#f0dcb4"/></svg>
<div class="t" style="left:164px;top:205.0px;letter-spacing:-0.05px;">shell.cdn.office.net</div>
<svg style="left:137.5px;top:225px;" width="6" height="9" viewBox="0 0 6 9"><path d="M0.900 0.900L4.300 3.950L0.900 7Z" fill="#fff" stroke="#3a3a3a" stroke-width="1.1"/></svg>
<svg style="left:148px;top:223.7px;" width="13" height="11" viewBox="0 0 13 11"><path d="M0.5 2.2Q0.5 1.4 1.3 1.4H2.8L3.6 0.4H11.4Q12.3 0.4 12.3 1.3V9.8Q12.3 10.6 11.5 10.6H1.3Q0.5 10.6 0.5 9.8Z" fill="#dcb67a"/><path d="M3.9 1.3H11.5V2.1H3.9Z" fill="#f0dcb4"/></svg>
<div class="t" style="left:164px;top:221.0px;letter-spacing:-0.05px;">substrate.office.com</div>
<svg style="left:137.5px;top:241px;" width="6" height="9" viewBox="0 0 6 9"><path d="M0.900 0.900L4.300 3.950L0.900 7Z" fill="#fff" stroke="#3a3a3a" stroke-width="1.1"/></svg>
<svg style="left:148px;top:239.7px;" width="13" height="11" viewBox="0 0 13 11"><path d="M0.5 2.2Q0.5 1.4 1.3 1.4H2.8L3.6 0.4H11.4Q12.3 0.4 12.3 1.3V9.8Q12.3 10.6 11.5 10.6H1.3Q0.5 10.6 0.5 9.8Z" fill="#dcb67a"/><path d="M3.9 1.3H11.5V2.1H3.9Z" fill="#f0dcb4"/></svg>
<div class="t" style="left:164px;top:237.0px;letter-spacing:-0.05px;">webpack:</div>
<svg style="left:136px;top:256px;" width="8" height="8" viewBox="0 0 8 8"><path d="M7 0.5V7H0.5Z" fill="#333"/></svg>
<svg style="left:148px;top:255.7px;" width="13" height="11" viewBox="0 0 13 11"><path d="M0.5 2.2Q0.5 1.4 1.3 1.4H2.8L3.6 0.4H11.4Q12.3 0.4 12.3 1.3V9.8Q12.3 10.6 11.5 10.6H1.3Q0.5 10.6 0.5 9.8Z" fill="#dcb67a"/><path d="M3.9 1.3H11.5V2.1H3.9Z" fill="#f0dcb4"/></svg>
<div class="t" style="left:164px;top:253.0px;letter-spacing:-0.05px;">www.office.com</div>
<svg style="left:158px;top:270px;" width="13" height="14" viewBox="0 0 13 14"><path d="M3 9V0.7H8.5L11.5 3.7V13H9.5" fill="none" stroke="#444" stroke-width="1"/><path d="M8.2 0.7V4H11.5" fill="none" stroke="#444" stroke-width="1"/><circle cx="5.6" cy="11" r="1.9" fill="#2a8be0"/><path d="M2.4 9.3L0.9 11L2.4 12.7M8.8 9.3L10.3 11L8.8 12.7" fill="none" stroke="#444" stroke-width="0.9"/></svg>
<div class="t" style="left:174px;top:269.0px;">apps</div>
<svg style="left:159px;top:286px;" width="12" height="13" viewBox="0 0 12 13"><rect x="0.5" y="0.5" width="10.5" height="11.5" fill="#fff" stroke="#333" stroke-width="1"/><path d="M2.2 3.2H5.2M3.7 1.8V4.8" stroke="#333" stroke-width="0.9"/><path d="M6.8 2.2H9.5V5" fill="none" stroke="#333" stroke-width="0.9"/><path d="M2.5 9.8L4.5 6.6L4.5 9.8Z" fill="#d22"/><path d="M6.8 7.2H9.3M6.8 9.5H9.3" stroke="#333" stroke-width="0.9"/></svg>
<svg style="left:174px;top:286px;" width="14" height="13" viewBox="0 0 14 13"><path d="M7 0.6L13.5 12.4H0.5Z" fill="#f5b800"/><path d="M7 4.2V8.6" stroke="#fff" stroke-width="1.6"/><circle cx="7" cy="10.6" r="0.95" fill="#fff"/></svg>
<div class="t" style="left:192px;top:285.0px;">pwa</div>
<svg style="left:137.5px;top:305px;" width="6" height="9" viewBox="0 0 6 9"><path d="M0.900 0.900L4.300 3.950L0.900 7Z" fill="#fff" stroke="#3a3a3a" stroke-width="1.1"/></svg>
<svg style="left:148px;top:303.7px;" width="13" height="11" viewBox="0 0 13 11"><path d="M0.5 2.2Q0.5 1.4 1.3 1.4H2.8L3.6 0.4H11.4Q12.3 0.4 12.3 1.3V9.8Q12.3 10.6 11.5 10.6H1.3Q0.5 10.6 0.5 9.8Z" fill="#dcb67a"/><path d="M3.9 1.3H11.5V2.1H3.9Z" fill="#f0dcb4"/></svg>
<div class="t" style="left:164px;top:301.0px;letter-spacing:-0.05px;">Dynamic scripts</div>
<div class="abs" style="left:434px;top:108px;width:646px;height:1052px;overflow:hidden;background:#fff">
<div class="abs" style="left:0px;top:0px;width:19px;height:1052px;background:#e6e7e8;"></div>
<div class="abs" style="left:629px;top:0px;width:17px;height:30px;background:#fbfbfb;"></div>
<div class="abs" style="left:629px;top:30px;width:17px;height:1022px;background:#fafafa;border-left:1px solid #e0e0e0;border-top:1px solid #e0e0e0;"></div>
<svg style="left:632px;top:12px;" width="11" height="7" viewBox="0 0 11 7"><path d="M1 6L5.5 1.5L10 6" fill="none" stroke="#333" stroke-width="1.6"/></svg>
<div class="ln" style="top:-2px">653</div>
<div class="cl" style="top:-2px">    }</div>
<div class="ln" style="top:16px">654</div>
<div class="ln" style="top:34px">655</div>
<div class="cl" style="top:34px">    <span class="k">private</span> launchViaProtocol(commands: Array&lt;AppServiceCommand&gt;, launchLocalAppStart: <span class="k">string</span></div>
<div class="ln" style="top:52px">656</div>
<div class="cl" style="top:52px">        <span class="k">return</span> <span class="k">this</span>.urlLauncherService.supportsProtocol(PwaNativeBridgeService.launchProtocol</div>
<div class="ln" style="top:70px">657</div>
<div class="cl" style="top:70px">            <span class="k">if</span> (!supported) {</div>
<div class="ln" style="top:88px">658</div>
<div class="cl" style="top:88px">                <span class="k">return</span> Promise.reject(<span class="s">'Launcher unavailable'</span>);</div>
<div class="ln" style="top:106px">659</div>
<div class="cl" style="top:106px">            }</div>
<div class="ln" style="top:124px">660</div>
<div class="cl" style="top:124px">            <span class="k">let</span> <span class="hl">launchUri</span> = <span class="s">''</span>;</div>
<div class="ln" style="top:142px">661</div>
<div class="cl" style="top:142px">            <span class="k">const</span> commandDataDetails = commands[<span class="s">1</span>].data.details;</div>
<div class="ln" style="top:160px">662</div>
<div class="cl" style="top:160px">            <span class="k">if</span> (commandDataDetails &amp;&amp; commandDataDetails.name === <span class="s">'OneDrive'</span> &amp;&amp;</div>
<div class="ln" style="top:178px">663</div>
<div class="cl" style="top:178px">                commandDataDetails.discovered &amp;&amp; commandDataDetails.discovered.uri &amp;&amp;</div>
<div class="ln" style="top:196px">664</div>
<div class="cl" style="top:196px">                commandDataDetails.discovered.uri.toLowerCase() === <span class="s">'odopen'</span>) {</div>
<div class="ln" style="top:214px">665</div>
<div class="cl" style="top:214px">                <span class="hl">launchUri</span> = <span class="k">this</span>.getOneDrive<span class="hb">LaunchUri</span>();</div>
<div class="ln" style="top:232px">666</div>
<div class="cl" style="top:232px">            } <span class="k">else</span> {</div>
<div class="ln" style="top:250px">667</div>
<div class="cl" style="top:250px">                <span class="k">const</span> message = {};</div>
<div class="ln" style="top:268px">668</div>
<div class="cl" style="top:268px">                commands.forEach(command =&gt; {</div>
<div class="ln" style="top:286px">669</div>
<div class="cl" style="top:286px">                    message[command.method] = command.data;</div>
<div class="ln" style="top:304px">670</div>
<div class="cl" style="top:304px">                });</div>
<div class="ln" style="top:322px">671</div>
<div class="ln" style="top:340px">672</div>
<div class="cl" style="top:340px">                <span class="k">const</span> clientStartupContext = <span class="k">this</span>.clientStartupConfigService.config.shared</div>
<div class="ln" style="top:358px">673</div>
<div class="cl" style="top:358px">                <span class="k">const</span> cid = clientStartupContext.correlationId;</div>
<div class="ln" style="top:376px">674</div>
<div class="cl" style="top:376px">                <span class="k">const</span> sid = clientStartupContext.sessionId;</div>
<div class="ln" style="top:394px">675</div>
<div class="cl" style="top:394px">                <span class="c">// Message is stringified twice so that parameter is sent as string</span></div>
<div class="ln" style="top:412px">676</div>
<div class="cl" style="top:412px">                <span class="hl">launchUri</span> = PwaNativeBridgeService.launchProtocol + JSON.stringify(JSON.stringify</div>
<div class="ln" style="top:430px">677</div>
<div class="cl" style="top:430px">            }</div>
<div class="ln" style="top:448px">678</div>
<div class="ln" style="top:466px">679</div>
<div class="cl" style="top:466px">            <span class="hy"><span class="k">return</span> <span class="k">this</span>.urlLauncherService.openUrl(<span class="hg">launchUri</span>,</span> LaunchAction.LaunchProtocol,</div>
<div class="ln" style="top:484px">680</div>
<div class="cl" style="top:484px">        });</div>
<div class="ln" style="top:502px">681</div>
<div class="cl" style="top:502px">    }</div>
<div class="ln" style="top:520px">682</div>
<div class="ln" style="top:538px">683</div>
<div class="cl" style="top:538px">    <span class="k">private</span> getLocalMruPromise(appsString: <span class="k">string</span>): Promise&lt;MruData&gt; {</div>
<div class="ln" style="top:556px">684</div>
<div class="cl" style="top:556px">        <span class="k">return</span> <span class="k">new</span> Promise&lt;MruData&gt;((resolve, reject) =&gt; {</div>
<div class="ln" style="top:574px">685</div>
<div class="cl" style="top:574px">            <span class="k">const</span> apps = {</div>
<div class="ln" style="top:592px">686</div>
<div class="cl" style="top:592px">                apps: appsString</div>
<div class="ln" style="top:610px">687</div>
<div class="cl" style="top:610px">            };</div>
<div class="ln" style="top:628px">688</div>
<div class="ln" style="top:646px">689</div>
<div class="cl" style="top:646px">            <span class="k">const</span> commands: Array&lt;AppServiceCommand&gt; = [</div>
<svg style="left:3px;top:466.7px;" width="15" height="14" viewBox="0 0 15 14"><circle cx="7.7" cy="7" r="6.600" fill="#e83a0e"/><path d="M0.600 5.200H6.600V2.300L11.800 7L6.600 11.700V8.800H0.600Z" fill="#f59a23" stroke="#fff" stroke-width="1.1" stroke-linejoin="round"/></svg>
<div class="abs" style="left:629px;top:622px;width:17px;height:34px;background:#c9c9c9;"></div>
<div class="abs" style="left:630px;top:624px;width:8px;height:9px;background:#8a8a8a;"></div>
<div class="abs" style="left:630px;top:637px;width:7px;height:8px;background:#9a9a9a;"></div>
<div class="abs" style="left:638px;top:640px;width:8px;height:5px;background:#33335a;"></div>
</div>
<div class="abs" style="left:1080px;top:84px;width:3px;height:1076px;background:#c8cadc;"></div>
<div class="abs" style="left:1083px;top:84px;width:517px;height:1076px;background:#fff;"></div>
<div class="abs" style="left:1083px;top:84px;width:517px;height:24px;background:#f1f1f1;"></div>
<div class="t" style="left:1093px;top:87.5px;color:#0f70c8;letter-spacing:-0.1px;">Watches</div>
<div class="abs" style="left:1084px;top:196px;width:516px;height:20px;background:#d9d9d9;"></div>
<svg style="left:1089px;top:142px;" width="7" height="7" viewBox="0 0 7 7"><path d="M6.5 0V6.5H0Z" fill="#404040"/></svg>
<div class="t" style="left:1101px;top:137.0px;color:#0f70c8;">[Locals]</div>
<svg style="left:1102.3px;top:160.8px;" width="6" height="9" viewBox="0 0 6 9"><path d="M0.900 0.900L4.400 4.200L0.900 7.500Z" fill="#fff" stroke="#3a3a3a" stroke-width="1.1"/></svg>
<svg style="left:1111px;top:160px;" width="11" height="10" viewBox="0 0 11 10"><path d="M0.3 3.6L6.2 0.3L10.6 1.8V6.2L4.6 9.7L0.3 8Z" fill="#1a73c8"/><path d="M1.6 3.7L6.2 1.2L9.2 2.2L4.7 4.8Z" fill="#fff" opacity="0.95"/></svg>
<div class="t" style="left:1125px;top:157.0px;color:#0f70c8;">this</div>
<div class="t" style="left:1403px;top:157.0px;letter-spacing:0.02px;">[object (Q)]</div>
<svg style="left:1102.3px;top:180.8px;" width="6" height="9" viewBox="0 0 6 9"><path d="M0.900 0.900L4.400 4.200L0.900 7.500Z" fill="#fff" stroke="#3a3a3a" stroke-width="1.1"/></svg>
<svg style="left:1111px;top:180px;" width="11" height="10" viewBox="0 0 11 10"><path d="M0.3 3.6L6.2 0.3L10.6 1.8V6.2L4.6 9.7L0.3 8Z" fill="#1a73c8"/><path d="M1.6 3.7L6.2 1.2L9.2 2.2L4.7 4.8Z" fill="#fff" opacity="0.95"/></svg>
<div class="t" style="left:1125px;top:177.0px;color:#0f70c8;">arguments</div>
<div class="t" style="left:1403px;top:177.0px;letter-spacing:0.02px;">[object (Arguments)]</div>
<svg style="left:1111px;top:200px;" width="11" height="10" viewBox="0 0 11 10"><path d="M0.3 3.6L6.2 0.3L10.6 1.8V6.2L4.6 9.7L0.3 8Z" fill="#1a73c8"/><path d="M1.6 3.7L6.2 1.2L9.2 2.2L4.7 4.8Z" fill="#fff" opacity="0.95"/></svg>
<div class="t" style="left:1125px;top:197.0px;color:#0f70c8;">n</div>
<div class="t" style="left:1403px;top:197.0px;letter-spacing:0.02px;">ms-officecmd:"{\"id\":3,\"LocalProviders.LaunchOffice</div>
<svg style="left:1102.3px;top:220.8px;" width="6" height="9" viewBox="0 0 6 9"><path d="M0.900 0.900L4.400 4.200L0.900 7.500Z" fill="#fff" stroke="#3a3a3a" stroke-width="1.1"/></svg>
<svg style="left:1111px;top:220px;" width="11" height="10" viewBox="0 0 11 10"><path d="M0.3 3.6L6.2 0.3L10.6 1.8V6.2L4.6 9.7L0.3 8Z" fill="#1a73c8"/><path d="M1.6 3.7L6.2 1.2L9.2 2.2L4.7 4.8Z" fill="#fff" opacity="0.95"/></svg>
<div class="t" style="left:1125px;top:217.0px;color:#0f70c8;">r</div>
<div class="t" style="left:1403px;top:217.0px;color:#2b91af;letter-spacing:0.02px;">[object]</div>
<svg style="left:1111px;top:240px;" width="11" height="10" viewBox="0 0 11 10"><path d="M0.3 3.6L6.2 0.3L10.6 1.8V6.2L4.6 9.7L0.3 8Z" fill="#1a73c8"/><path d="M1.6 3.7L6.2 1.2L9.2 2.2L4.7 4.8Z" fill="#fff" opacity="0.95"/></svg>
<div class="t" style="left:1125px;top:237.0px;color:#0f70c8;">i</div>
<div class="t" style="left:1403px;top:237.0px;letter-spacing:0.02px;">true</div>
<svg style="left:1101px;top:262px;" width="7" height="7" viewBox="0 0 7 7"><path d="M6.5 0V6.5H0Z" fill="#404040"/></svg>
<div class="t" style="left:1113px;top:257.0px;color:#0f70c8;">[Scope]</div>
<div class="t" style="left:1403px;top:257.0px;color:#2b91af;letter-spacing:0.02px;">Q.prototype.launchViaProtocol</div>
<svg style="left:1114.3px;top:280.8px;" width="6" height="9" viewBox="0 0 6 9"><path d="M0.900 0.900L4.400 4.200L0.900 7.500Z" fill="#fff" stroke="#3a3a3a" stroke-width="1.1"/></svg>
<svg style="left:1123px;top:280px;" width="11" height="10" viewBox="0 0 11 10"><path d="M0.3 3.6L6.2 0.3L10.6 1.8V6.2L4.6 9.7L0.3 8Z" fill="#1a73c8"/><path d="M1.6 3.7L6.2 1.2L9.2 2.2L4.7 4.8Z" fill="#fff" opacity="0.95"/></svg>
<div class="t" style="left:1137px;top:277.0px;color:#0f70c8;">e</div>
<div class="t" style="left:1403px;top:277.0px;letter-spacing:0.02px;">[[object Object],[object Object]]</div>
<svg style="left:1123px;top:300px;" width="11" height="10" viewBox="0 0 11 10"><path d="M0.3 3.6L6.2 0.3L10.6 1.8V6.2L4.6 9.7L0.3 8Z" fill="#1a73c8"/><path d="M1.6 3.7L6.2 1.2L9.2 2.2L4.7 4.8Z" fill="#fff" opacity="0.95"/></svg>
<div class="t" style="left:1137px;top:297.0px;color:#0f70c8;">t</div>
<div class="t" style="left:1403px;top:297.0px;letter-spacing:0.02px;">1618919139308</div>
<svg style="left:1101px;top:322px;" width="7" height="7" viewBox="0 0 7 7"><path d="M6.5 0V6.5H0Z" fill="#404040"/></svg>
<div class="t" style="left:1113px;top:317.0px;color:#0f70c8;">[Scope]</div>
<svg style="left:1114.3px;top:340.8px;" width="6" height="9" viewBox="0 0 6 9"><path d="M0.900 0.900L4.400 4.200L0.900 7.500Z" fill="#fff" stroke="#3a3a3a" stroke-width="1.1"/></svg>
<svg style="left:1123px;top:339.8px;" width="10" height="11" viewBox="0 0 10 11"><path d="M4.800 0.800L8.900 3V7.600L4.800 9.800L0.700 7.600V3Z" fill="#fff" stroke="#6c2fa0" stroke-width="1.4" stroke-linejoin="round"/><path d="M0.700 3L4.800 5.200L8.900 3M4.800 5.200V9.800" fill="none" stroke="#6c2fa0" stroke-width="1.3"/></svg>
<div class="t" style="left:1137px;top:337.0px;color:#0f70c8;">Q</div>
<div class="t" style="left:1403px;top:337.0px;letter-spacing:-0.2px;">class Q{constructor(e,t,i,n,r,s,a,o,l,u){this.a=e</div>
<svg style="left:1101px;top:362px;" width="7" height="7" viewBox="0 0 7 7"><path d="M6.5 0V6.5H0Z" fill="#404040"/></svg>
<div class="t" style="left:1113px;top:357.0px;color:#0f70c8;">[Scope]</div>
<div class="t" style="left:1403px;top:357.0px;letter-spacing:0.02px;">qiPL</div>
<svg style="left:1114.3px;top:380.8px;" width="6" height="9" viewBox="0 0 6 9"><path d="M0.900 0.900L4.400 4.200L0.900 7.500Z" fill="#fff" stroke="#3a3a3a" stroke-width="1.1"/></svg>
<svg style="left:1123px;top:379.8px;" width="10" height="11" viewBox="0 0 10 11"><path d="M4.800 0.800L8.900 3V7.600L4.800 9.800L0.700 7.600V3Z" fill="#fff" stroke="#6c2fa0" stroke-width="1.4" stroke-linejoin="round"/><path d="M0.700 3L4.800 5.200L8.900 3M4.800 5.200V9.800" fill="none" stroke="#6c2fa0" stroke-width="1.3"/></svg>
<div class="t" style="left:1137px;top:377.0px;color:#0f70c8;">ne</div>
<div class="t" style="left:1403px;top:377.0px;letter-spacing:0.02px;">function ne(e,t,i,n){return i.config.mock?e</div>
<svg style="left:1114.3px;top:400.8px;" width="6" height="9" viewBox="0 0 6 9"><path d="M0.900 0.900L4.400 4.200L0.900 7.500Z" fill="#fff" stroke="#3a3a3a" stroke-width="1.1"/></svg>
<svg style="left:1123px;top:399.8px;" width="10" height="11" viewBox="0 0 10 11"><path d="M4.800 0.800L8.900 3V7.600L4.800 9.800L0.700 7.600V3Z" fill="#fff" stroke="#6c2fa0" stroke-width="1.4" stroke-linejoin="round"/><path d="M0.700 3L4.800 5.200L8.900 3M4.800 5.200V9.800" fill="none" stroke="#6c2fa0" stroke-width="1.3"/></svg>
<div class="t" style="left:1137px;top:397.0px;color:#0f70c8;">re</div>
<div class="t" style="left:1403px;top:397.0px;letter-spacing:0.02px;">function re(e,t,i){return i.config.mock?e</div>
<svg style="left:1114.3px;top:420.8px;" width="6" height="9" viewBox="0 0 6 9"><path d="M0.900 0.900L4.400 4.200L0.900 7.500Z" fill="#fff" stroke="#3a3a3a" stroke-width="1.1"/></svg>
<svg style="left:1123px;top:419.8px;" width="10" height="11" viewBox="0 0 10 11"><path d="M4.800 0.800L8.900 3V7.600L4.800 9.800L0.700 7.600V3Z" fill="#fff" stroke="#6c2fa0" stroke-width="1.4" stroke-linejoin="round"/><path d="M0.700 3L4.800 5.200L8.900 3M4.800 5.200V9.800" fill="none" stroke="#6c2fa0" stroke-width="1.3"/></svg>
<div class="t" style="left:1137px;top:417.0px;color:#0f70c8;">se</div>
<div class="t" style="left:1403px;top:417.0px;letter-spacing:0.02px;">function se(e,t,i,n,r){return n.config.enab</div>
<svg style="left:1114.3px;top:440.8px;" width="6" height="9" viewBox="0 0 6 9"><path d="M0.900 0.900L4.400 4.200L0.900 7.500Z" fill="#fff" stroke="#3a3a3a" stroke-width="1.1"/></svg>
<svg style="left:1123px;top:439.8px;" width="10" height="11" viewBox="0 0 10 11"><path d="M4.800 0.800L8.900 3V7.600L4.800 9.800L0.700 7.600V3Z" fill="#fff" stroke="#6c2fa0" stroke-width="1.4" stroke-linejoin="round"/><path d="M0.700 3L4.800 5.200L8.900 3M4.800 5.200V9.800" fill="none" stroke="#6c2fa0" stroke-width="1.3"/></svg>
<div class="t" style="left:1137px;top:437.0px;color:#0f70c8;">bt</div>
<div class="t" style="left:1403px;top:437.0px;letter-spacing:0.02px;">function bt(e){return n.bc(0,[n.Ub(67108</div>
<svg style="left:1114.3px;top:460.8px;" width="6" height="9" viewBox="0 0 6 9"><path d="M0.900 0.900L4.400 4.200L0.900 7.500Z" fill="#fff" stroke="#3a3a3a" stroke-width="1.1"/></svg>
<svg style="left:1123px;top:459.8px;" width="10" height="11" viewBox="0 0 10 11"><path d="M4.800 0.800L8.900 3V7.600L4.800 9.800L0.700 7.600V3Z" fill="#fff" stroke="#6c2fa0" stroke-width="1.4" stroke-linejoin="round"/><path d="M0.700 3L4.800 5.200L8.900 3M4.800 5.200V9.800" fill="none" stroke="#6c2fa0" stroke-width="1.3"/></svg>
<div class="t" style="left:1137px;top:457.0px;color:#0f70c8;">_t</div>
<div class="t" style="left:1403px;top:457.0px;letter-spacing:-0.08px;">function _t(e){return n.bc(0,[(e()(),n.zb(0</div>
<svg style="left:1114.3px;top:480.8px;" width="6" height="9" viewBox="0 0 6 9"><path d="M0.900 0.900L4.400 4.200L0.900 7.500Z" fill="#fff" stroke="#3a3a3a" stroke-width="1.1"/></svg>
<svg style="left:1123px;top:479.8px;" width="10" height="11" viewBox="0 0 10 11"><path d="M4.800 0.800L8.900 3V7.600L4.800 9.800L0.700 7.600V3Z" fill="#fff" stroke="#6c2fa0" stroke-width="1.4" stroke-linejoin="round"/><path d="M0.700 3L4.800 5.200L8.900 3M4.800 5.200V9.800" fill="none" stroke="#6c2fa0" stroke-width="1.3"/></svg>
<div class="t" style="left:1137px;top:477.0px;color:#0f70c8;">Lt</div>
<div class="t" style="left:1403px;top:477.0px;letter-spacing:-0.08px;">function Lt(e){return n.bc(0,[(e()(),n.zb(0</div>
<svg style="left:1114.3px;top:500.8px;" width="6" height="9" viewBox="0 0 6 9"><path d="M0.900 0.900L4.400 4.200L0.900 7.500Z" fill="#fff" stroke="#3a3a3a" stroke-width="1.1"/></svg>
<svg style="left:1123px;top:499.8px;" width="10" height="11" viewBox="0 0 10 11"><path d="M4.800 0.800L8.900 3V7.600L4.800 9.800L0.700 7.600V3Z" fill="#fff" stroke="#6c2fa0" stroke-width="1.4" stroke-linejoin="round"/><path d="M0.700 3L4.800 5.200L8.900 3M4.800 5.200V9.800" fill="none" stroke="#6c2fa0" stroke-width="1.3"/></svg>
<div class="t" style="left:1137px;top:497.0px;color:#0f70c8;">Kt</div>
<div class="t" style="left:1403px;top:497.0px;letter-spacing:-0.08px;">function Kt(e){return n.bc(0,[(e()(),n.zb(0</div>
<svg style="left:1114.3px;top:520.8px;" width="6" height="9" viewBox="0 0 6 9"><path d="M0.900 0.900L4.400 4.200L0.900 7.500Z" fill="#fff" stroke="#3a3a3a" stroke-width="1.1"/></svg>
<svg style="left:1123px;top:519.8px;" width="10" height="11" viewBox="0 0 10 11"><path d="M4.800 0.800L8.900 3V7.600L4.800 9.800L0.700 7.600V3Z" fill="#fff" stroke="#6c2fa0" stroke-width="1.4" stroke-linejoin="round"/><path d="M0.700 3L4.800 5.200L8.900 3M4.800 5.200V9.800" fill="none" stroke="#6c2fa0" stroke-width="1.3"/></svg>
<div class="t" style="left:1137px;top:517.0px;color:#0f70c8;">li</div>
<div class="t" style="left:1403px;top:517.0px;letter-spacing:-0.08px;">function li(e){return n.bc(0,[(e()(),n.zb(0</div>
<svg style="left:1114.3px;top:540.8px;" width="6" height="9" viewBox="0 0 6 9"><path d="M0.900 0.900L4.400 4.200L0.900 7.500Z" fill="#fff" stroke="#3a3a3a" stroke-width="1.1"/></svg>
<svg style="left:1123px;top:539.8px;" width="10" height="11" viewBox="0 0 10 11"><path d="M4.800 0.800L8.900 3V7.600L4.800 9.800L0.700 7.600V3Z" fill="#fff" stroke="#6c2fa0" stroke-width="1.4" stroke-linejoin="round"/><path d="M0.700 3L4.800 5.200L8.900 3M4.800 5.200V9.800" fill="none" stroke="#6c2fa0" stroke-width="1.3"/></svg>
<div class="t" style="left:1137px;top:537.0px;color:#0f70c8;">ci</div>
<div class="t" style="left:1403px;top:537.0px;letter-spacing:-0.08px;">function ci(e){return n.bc(0,[(e()(),n.zb(0</div>
<svg style="left:1114.3px;top:560.8px;" width="6" height="9" viewBox="0 0 6 9"><path d="M0.900 0.900L4.400 4.200L0.900 7.500Z" fill="#fff" stroke="#3a3a3a" stroke-width="1.1"/></svg>
<svg style="left:1123px;top:559.8px;" width="10" height="11" viewBox="0 0 10 11"><path d="M4.800 0.800L8.900 3V7.600L4.800 9.800L0.700 7.600V3Z" fill="#fff" stroke="#6c2fa0" stroke-width="1.4" stroke-linejoin="round"/><path d="M0.700 3L4.800 5.200L8.900 3M4.800 5.200V9.800" fill="none" stroke="#6c2fa0" stroke-width="1.3"/></svg>
<div class="t" style="left:1137px;top:557.0px;color:#0f70c8;">ui</div>
<div class="t" style="left:1403px;top:557.0px;letter-spacing:-0.08px;">function ui(e){return n.bc(0,[(e()(),n.zb(0</div>
<svg style="left:1114.3px;top:580.8px;" width="6" height="9" viewBox="0 0 6 9"><path d="M0.900 0.900L4.400 4.200L0.900 7.500Z" fill="#fff" stroke="#3a3a3a" stroke-width="1.1"/></svg>
<svg style="left:1123px;top:579.8px;" width="10" height="11" viewBox="0 0 10 11"><path d="M4.800 0.800L8.900 3V7.600L4.800 9.800L0.700 7.600V3Z" fill="#fff" stroke="#6c2fa0" stroke-width="1.4" stroke-linejoin="round"/><path d="M0.700 3L4.800 5.200L8.900 3M4.800 5.200V9.800" fill="none" stroke="#6c2fa0" stroke-width="1.3"/></svg>
<div class="t" style="left:1137px;top:577.0px;color:#0f70c8;">di</div>
<div class="t" style="left:1403px;top:577.0px;letter-spacing:-0.08px;">function di(e){return n.bc(0,[(e()(),n.zb(0</div>
<svg style="left:1114.3px;top:600.8px;" width="6" height="9" viewBox="0 0 6 9"><path d="M0.900 0.900L4.400 4.200L0.900 7.500Z" fill="#fff" stroke="#3a3a3a" stroke-width="1.1"/></svg>
<svg style="left:1123px;top:599.8px;" width="10" height="11" viewBox="0 0 10 11"><path d="M4.800 0.800L8.900 3V7.600L4.800 9.800L0.700 7.600V3Z" fill="#fff" stroke="#6c2fa0" stroke-width="1.4" stroke-linejoin="round"/><path d="M0.700 3L4.800 5.200L8.900 3M4.800 5.200V9.800" fill="none" stroke="#6c2fa0" stroke-width="1.3"/></svg>
<div class="t" style="left:1137px;top:597.0px;color:#0f70c8;">hi</div>
<div class="t" style="left:1403px;top:597.0px;letter-spacing:-0.08px;">function hi(e){return n.bc(0,[(e()(),n.zb(0</div>
<div class="abs" style="left:1083px;top:619px;width:517px;height:4px;background:#c8cadc;"></div>
<div class="abs" style="left:1083px;top:623px;width:517px;height:25px;background:#f1f1f1;"></div>
<div class="t" style="left:1093px;top:626.0px;color:#0f70c8;letter-spacing:-0.1px;">Call stack</div>
<div class="t" style="left:1154px;top:626.0px;color:#444;letter-spacing:-0.1px;">Breakpoints</div>
<div class="t" style="left:1226px;top:626.0px;color:#444;letter-spacing:-0.1px;">DOM breakpoints</div>
<svg style="left:1090.5px;top:678px;" width="7" height="7" viewBox="0 0 7 7"><path d="M6.5 0V6.5H0Z" fill="#333"/></svg>
<div class="t" style="left:1101px;top:673.0px;color:#333;">[Main Thread]</div>
<div class="abs" style="left:1083px;top:694px;width:517px;height:20px;background:#f3f3f3;"></div>
<svg style="left:1088px;top:694px;" width="13" height="13" viewBox="0 0 13 13"><path d="M0.5 4.5H6V1L12.3 6.5L6 12V8.5H0.5Z" fill="#f5821f"/></svg>
<div class="t" style="left:1107px;top:693.0px;">Anonymous function</div>
<div class="t" style="left:1416.5px;top:693.0px;letter-spacing:-0.1px;">pwa-native-bridge.service.ts (679, 13)</div>
<div class="t" style="left:1107px;top:713.0px;">e.prototype.invoke</div>
<div class="t" style="left:1416.5px;top:713.0px;letter-spacing:-0.27px;">zone.js (384, 17)</div>
<div class="t" style="left:1107px;top:733.0px;">onInvoke</div>
<div class="t" style="left:1416.5px;top:733.0px;letter-spacing:-0.27px;">core.js (41697, 17)</div>
<div class="t" style="left:1107px;top:753.0px;">e.prototype.invoke</div>
<div class="t" style="left:1416.5px;top:753.0px;letter-spacing:-0.27px;">zone.js (384, 17)</div>
<div class="t" style="left:1416.5px;top:773.0px;letter-spacing:-0.27px;">zone.js (143, 21)</div>
<div class="t" style="left:1416.5px;top:793.0px;letter-spacing:-0.27px;">zone.js (891, 21)</div>
<div class="t" style="left:1416.5px;top:813.0px;letter-spacing:-0.27px;">zone.js (419, 17)</div>
<div class="t" style="left:1416.5px;top:833.0px;letter-spacing:-0.27px;">core.js (41675, 17)</div>
<div class="t" style="left:1416.5px;top:853.0px;letter-spacing:-0.27px;">zone.js (419, 17)</div>
<div class="t" style="left:1416.5px;top:873.0px;letter-spacing:-0.27px;">zone.js (188, 25)</div>
<div class="t" style="left:1416.5px;top:893.0px;letter-spacing:-0.27px;">zone.js (601, 29)</div>
</div></div>
<div class="abs" style="left:64px;top:763px;width:1234px;height:397px;background:#fff;background-clip:padding-box;border:2px solid rgba(0,0,0,0.56);border-bottom:none;box-shadow:4px 5px 16px 0 rgba(0,0,0,0.42)"></div>
<svg style="left:74px;top:769px;" width="17" height="18" viewBox="0 0 17 18"><path d="M4 3H15.500V16.500H4Z" fill="#fff" stroke="#a89868" stroke-width="0.7"/><path d="M3.200 2.200H13.400L11.800 14H0.700Z" fill="#9ad2e4"/><path d="M3.200 2.200H13.400L13 5H2.600Z" fill="#bfe4f0"/><path d="M2.500 5.500H12.900M2.200 7.600H12.600M1.900 9.700H12.300M1.600 11.800H12" stroke="#c4e6f0" stroke-width="0.8"/><path d="M0.700 14H11.800" stroke="#6aa8c0" stroke-width="0.6"/><path d="M3.800 1V3M5.800 1V3M7.800 1V3M9.800 1V3M11.800 1V3" stroke="#444" stroke-width="0.9"/></svg>
<div class="t" style="left:95px;top:771.0px;color:#000;letter-spacing:0.12px;">*Untitled - Notepad</div>
<svg style="left:1177px;top:778px;" width="10" height="1" viewBox="0 0 10 1"><rect width="10" height="1" fill="#000"/></svg>
<svg style="left:1222px;top:773px;" width="10" height="10" viewBox="0 0 10 10"><rect x="0.5" y="0.5" width="9" height="9" fill="none" stroke="#000" stroke-width="1"/></svg>
<svg style="left:1268px;top:773px;" width="10" height="10" viewBox="0 0 10 10"><path d="M0.4 0.4L9.6 9.6M9.6 0.4L0.4 9.6" stroke="#000" stroke-width="1.1"/></svg>
<div class="t" style="left:73px;top:796.0px;color:#000;">File</div>
<div class="t" style="left:105px;top:796.0px;color:#000;">Edit</div>
<div class="t" style="left:139px;top:796.0px;color:#000;">Format</div>
<div class="t" style="left:191px;top:796.0px;color:#000;">View</div>
<div class="t" style="left:230px;top:796.0px;color:#000;">Help</div>
<div class="abs" style="left:66px;top:812px;width:1230px;height:2px;background:#f0f0f0;"></div>
<div class="npt" style="left:70px;top:814.5px">ms-officecmd:"{\"id\":3,\"LocalProviders.LaunchOfficeAppForResult\":{\"details\":{\"appId\":8,\"name\":\"Outlook\",\"discovered\":{\"command\":\"c:\\</div>
<div class="npt" style="left:70px;top:832.5px">\\program files\\\\microsoft office\\\\root\\\\office16\\\\outlook.exe\"}},\"filename\":\"\"}}" cid:0e5d65e6-f8eb-4d46-81f7-0843973f0e83</div>
<div class="npt" style="left:70px;top:850.5px">sid:1afbc25d-4e7d-4fa8-86b4-d9d547052277 requestStart:1618919139308</div>
<div class="abs" style="left:70px;top:814px;width:1px;height:18px;background:#000;"></div>
<div class="abs" style="left:1280px;top:812px;width:16px;height:348px;background:#f0f0f0;"></div>
<svg style="left:1283px;top:820px;" width="10" height="6" viewBox="0 0 10 6"><path d="M1 5.5L5 1.5L9 5.5" fill="none" stroke="#b0b0b0" stroke-width="1.3"/></svg>
<div class="abs" style="left:0px;top:1160px;width:1600px;height:40px;background:#eeeeee;"></div>
<div class="abs" style="left:1296px;top:1160px;width:304px;height:40px;background:#c9d2e4;"></div>
<div class="abs" style="left:1296px;top:1158px;width:304px;height:2px;background:#12338a;"></div>
<div class="abs" style="left:0px;top:1160px;width:48px;height:40px;background:#cfe2ee;"></div>
<svg style="left:16px;top:1172px;" width="16" height="16" viewBox="0 0 16 16"><path d="M0 2.3L6.6 1.4V7.6H0ZM7.4 1.3L16 0V7.6H7.4ZM0 8.4H6.6V14.6L0 13.7ZM7.4 8.4H16V16L7.4 14.7Z" fill="#000"/></svg>
<div class="abs" style="left:48px;top:1160px;width:344px;height:40px;background:#fff;border:1px solid #c8c8c8;border-bottom:none;"></div>
<svg style="left:59px;top:1171px;" width="18" height="18" viewBox="0 0 18 18"><circle cx="11" cy="6.5" r="5" fill="none" stroke="#222" stroke-width="1.3"/><path d="M7.5 10.2L1 16.8" stroke="#222" stroke-width="1.3"/></svg>
<div class="t" style="left:88px;top:1170.5px;color:#2b2b2b;font-size:14.5px;line-height:20px;height:20px;">Type here to search</div>
<svg style="left:407px;top:1171px;" width="18" height="17" viewBox="0 0 18 17"><path d="M1 1.2H14M1 15.8H14" stroke="#000" stroke-width="1.4"/><rect x="3" y="4.2" width="9" height="8.6" fill="none" stroke="#000" stroke-width="1.4"/><path d="M16 0.5V5.5M16 11.5V16.5" stroke="#000" stroke-width="1.4"/><rect x="14.6" y="7" width="2.8" height="3" fill="#000"/></svg>
<svg style="left:455px;top:1168px;" width="24" height="24" viewBox="0 0 24 24"><defs><linearGradient id="eg1" x1="0" y1="0" x2="1" y2="0"><stop offset="0" stop-color="#2aa8e0"/><stop offset="0.6" stop-color="#3cc87a"/><stop offset="1" stop-color="#6ed84a"/></linearGradient><linearGradient id="eg2" x1="0" y1="0" x2="0" y2="1"><stop offset="0" stop-color="#1a7ad0"/><stop offset="1" stop-color="#0c4a9a"/></linearGradient></defs><circle cx="12" cy="12" r="12" fill="url(#eg2)"/><path d="M0.3 10C1.5 4 6.5 0 12 0C19 0 24 5 24 11C24 15 21 17.5 17.5 17.5C15 17.5 13.8 16.3 14.5 14.8C15.5 12.5 14.2 8.5 10 8.5C5 8.5 1.2 11.5 0.3 15Z" fill="url(#eg1)"/><path d="M9.5 9.5C6 10.5 4.5 14 6 17.5C7.8 21.5 12.5 23.8 17 22.6C19.5 21.9 21.8 20 22.8 18C20 19.8 15.8 19.8 13.2 17.4C11 15.4 10.5 12.5 12.5 10.2C11.5 9.5 10.5 9.3 9.5 9.5Z" fill="#114a9a"/><path d="M10.5 12.3C10 14.5 11.2 16.8 13.4 17.6C15.6 18.4 18.6 17.8 20.8 16.2C19.6 17.2 17.8 17.6 16.2 17.2C14.6 16.8 14 15.8 14.5 14.8C14.9 13.8 14.5 12.2 12.8 11.4C11.8 11 10.8 11.4 10.5 12.3Z" fill="#fff"/></svg>
<div class="abs" style="left:492px;top:1160px;width:48px;height:40px;background:#f7f7f7;"></div>
<svg style="left:505px;top:1170px;" width="22" height="19" viewBox="0 0 22 19"><path d="M0 1.2Q0 0.2 1 0.2H7L9 2.2H21Q22 2.2 22 3.2V6H0Z" fill="#e8a825"/><path d="M0 4.5H22V17.2Q22 18.2 21 18.2H1Q0 18.2 0 17.2Z" fill="#fcd462"/><path d="M5 11.5H17V18.2H5Z" fill="#2c8ae8"/><path d="M8 14.5H14V18.2H8Z" fill="#fcd462"/><path d="M0 17H22V18.2H0Z" fill="#e2b040"/></svg>
<svg style="left:555px;top:1168px;" width="19" height="23" viewBox="0 0 19 23"><defs><linearGradient id="og" x1="0" y1="0" x2="1" y2="0"><stop offset="0" stop-color="#c8201a"/><stop offset="1" stop-color="#e85a10"/></linearGradient></defs><path d="M0.5 5.5L11.5 0.5L18.5 2.5V20.5L11.5 22.5L0.5 18.5L11.5 19.8V4L4.8 5.8V16.2L0.5 18.5Z" fill="url(#og)"/><path d="M11.5 0.5L18.5 2.5V20.5L11.5 22.5Z" fill="#e2520e"/><path d="M0.5 5.5L4.8 5.8V16.2L0.5 18.5Z" fill="#b01818"/></svg>
<div class="abs" style="left:545px;top:1197px;width:40px;height:3px;background:#0a78d6;"></div>
<div class="abs" style="left:602px;top:1168px;width:24px;height:24px;background:#0b79d8;"></div>
<svg style="left:605px;top:1171px;" width="18" height="18" viewBox="0 0 18 18"><path d="M1.5 2.5H12.5V5" fill="none" stroke="#fff" stroke-width="1.4"/><path d="M1.5 2.5V10.5H5.5" fill="none" stroke="#fff" stroke-width="1.4"/><path d="M5 5L3.6 6.5L5 8M7.2 5L8.6 6.5L7.2 8" fill="none" stroke="#fff" stroke-width="1"/><path d="M16.6 4.2L13.8 7L12.2 6.6L11.8 5L14.6 2.2C12.6 1.6 10.2 3.2 10.4 5.8L10.6 6.8L4.2 13.2C3.2 14.2 3.4 15.4 4 16C4.6 16.6 5.8 16.8 6.8 15.8L13.2 9.4L14.2 9.6C16.8 9.8 18.2 7 16.6 4.200Z" fill="#fff"/></svg>
<div class="abs" style="left:594px;top:1197px;width:34px;height:3px;background:#0a78d6;"></div>
<div class="abs" style="left:628px;top:1197px;width:6px;height:3px;background:#7ab4e6;"></div>
<div class="abs" style="left:639px;top:1160px;width:48px;height:40px;background:#f7f7f7;"></div>
<svg style="left:650px;top:1169px;" width="25" height="23" viewBox="0 0 25 23"><path d="M9 3.5L23.5 2L22 19.5L6.5 21.5Z" fill="#e8e2cc" stroke="#b0a890" stroke-width="0.5"/><path d="M7.5 2.8L22 1.2L19.5 18.8L1 20.6Z" fill="#9ad4ea"/><path d="M7.5 2.8L22 1.2L21.6 4L7 5.8Z" fill="#c8e8f4"/><path d="M6.3 7.5L20.8 5.8M5.4 10.5L20.3 8.8M4.4 13.5L19.8 11.8M3.4 16.5L19.4 14.8" stroke="#bfe4f2" stroke-width="0.9"/><path d="M1 20.6L19.5 18.8L19.3 20L1.4 21.6Z" fill="#6aa8c4"/></svg>
<div class="abs" style="left:639px;top:1197px;width:48px;height:3px;background:#0a78d6;"></div>
<svg style="left:1332px;top:1174px;" width="14" height="9" viewBox="0 0 14 9"><path d="M1 8L7 1.6L13 8" fill="none" stroke="#1a1a1a" stroke-width="1.4"/></svg>
<svg style="left:1356px;top:1171px;" width="14" height="18" viewBox="0 0 14 18"><rect x="1.5" y="4.5" width="8" height="8" rx="1.8" fill="none" stroke="#1a1a1a" stroke-width="1.1"/><path d="M9.5 8.5L12.5 6.5V11L9.5 9.5" fill="none" stroke="#1a1a1a" stroke-width="1"/><path d="M3 2.2Q6 0.2 9 2.2M3 15Q6 17 9 15" fill="none" stroke="#1a1a1a" stroke-width="1"/></svg>
<svg style="left:1379px;top:1174px;" width="18" height="12" viewBox="0 0 18 12"><rect x="5.5" y="2.5" width="10.5" height="7" fill="none" stroke="#1a1a1a" stroke-width="1"/><rect x="7" y="4" width="7.5" height="4" fill="#1a1a1a"/><rect x="16" y="4.5" width="1.2" height="3" fill="#1a1a1a"/><path d="M0.5 3.5H3.5M2 1.5V3.5M1 3.5V6Q1 8 3 8V10.5" fill="none" stroke="#1a1a1a" stroke-width="1"/></svg>
<svg style="left:1403px;top:1173px;" width="18" height="15" viewBox="0 0 18 15"><rect x="4.5" y="1.5" width="12" height="8.5" fill="none" stroke="#1a1a1a" stroke-width="1.1"/><path d="M10.5 10V13M6.5 13.5H14.5" stroke="#1a1a1a" stroke-width="1.1"/><rect x="0.5" y="0.5" width="4.5" height="3.5" fill="#c9d2e4" stroke="#1a1a1a" stroke-width="0.9"/><path d="M2.7 4V13.5H6.5" fill="none" stroke="#1a1a1a" stroke-width="0.9"/></svg>
<svg style="left:1427px;top:1172px;" width="18" height="16" viewBox="0 0 18 16"><path d="M1 5.5H4L8 1.5V14.5L4 10.5H1Z" fill="none" stroke="#1a1a1a" stroke-width="1.1"/><path d="M10.5 5.5Q12 8 10.5 10.5M12.8 3.5Q15.5 8 12.8 12.5M15 1.8Q18.6 8 15 14.2" fill="none" stroke="#1a1a1a" stroke-width="1"/></svg>
<div class="t" style="left:1453.5px;top:1172.0px;color:#1a1a1a;font-size:11px;letter-spacing:-0.3px;">ENG</div>
<div class="t" style="left:1493px;top:1162.5px;color:#1a1a1a;letter-spacing:-0.3px;">4:49 AM</div>
<div class="t" style="left:1489px;top:1181.0px;color:#1a1a1a;letter-spacing:-0.3px;">4/20/2021</div>
<svg style="left:1558px;top:1171px;" width="18" height="18" viewBox="0 0 18 18"><path d="M1.5 1.5H16.500V12.5H11L9 15L7 12.5H1.5Z" fill="none" stroke="#1a1a1a" stroke-width="1.1"/></svg>
<div class="abs" style="left:1595px;top:1160px;width:1px;height:40px;background:#9aa6ba;"></div>
<svg style="left:1452px;top:1152px;" width="40" height="40" viewBox="0 0 40 40"><g opacity="0.78"><circle cx="19.300" cy="18.800" r="17" fill="none" stroke="#fff" stroke-width="1.3"/><path d="M11.500 17.500Q15 10.500 22.500 11.500L33 27Q30 33 24 35.500L19 30.500L17 34.500Q12.500 31 11 26Z" fill="#fff"/><path d="M13.500 11.500L14.300 13.300L16.200 13.500L14.800 14.800L15.200 16.700L13.500 15.700L11.800 16.700L12.200 14.800L10.800 13.500L12.700 13.300Z" fill="#fff"/></g><path d="M22.500 11.500L27.500 33.500" stroke="#c9d2e4" stroke-width="0.9" opacity="0.8"/></svg>
<div class="t" style="left:1496px;top:1158px;font-size:22.500px;line-height:26px;height:26px;color:rgba(255,255,255,0.72);letter-spacing:-0.35px;">Seebug</div>
<div class="abs" style="left:478px;top:1140px;width:77px;height:20px;background:#fff;border:1px solid #c8c8c8;box-shadow:2px 2px 3px rgba(0,0,0,0.18);"></div>
<div class="t" style="left:484.5px;top:1142.0px;color:#c6c2ca;letter-spacing:-0.22px;">File Explorer</div>
</body></html>
